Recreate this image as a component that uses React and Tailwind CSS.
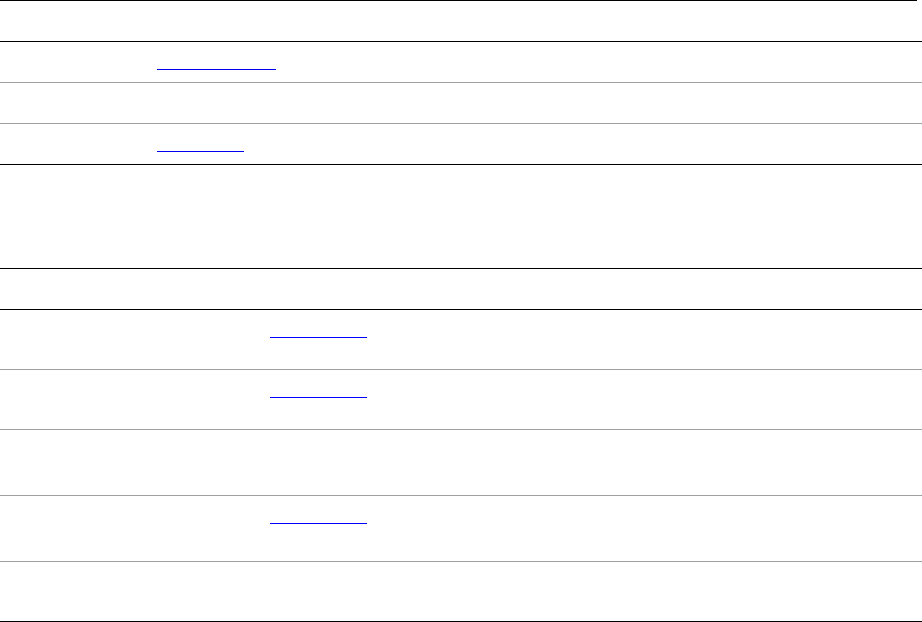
export default function App() {
  const Row = ({ h, border, link, linkColor = "bg-[#0000ee]", linkLeft = "pl-[157px]" }) => (
    <div className={`w-[922px] ${h} ${border} border-b flex ${linkLeft} pt-[27px]`}>
      {link ? <div className={`h-px ${link} ${linkColor}`} /> : null}
    </div>
  );
  return (
    <div className="w-[922px] h-[622px] bg-white overflow-hidden flex flex-col" style={{ fontFamily: '"Liberation Sans", Arial, sans-serif' }}>
      <div className="w-[917px] h-px bg-black" />
      <div className="w-[922px] h-[41px] border-b border-black" />
      <Row h="h-[41px]" border="border-[#a0a0a0]" link="w-[119px]" />
      <Row h="h-[41px]" border="border-[#a0a0a0]" />
      <Row h="h-[41px]" border="border-black" link="w-[87px]" />
      <div className="h-[103px]" />
      <div className="w-[922px] h-px bg-black" />
      <div className="w-[922px] h-[41px] border-b border-black" />
      <Row h="h-[60px]" border="border-[#a0a0a0]" link="w-[97px]" linkColor="bg-[#0000ff]" linkLeft="pl-[270px]" />
      <Row h="h-[60px]" border="border-[#a0a0a0]" link="w-[97px]" linkColor="bg-[#0000ff]" linkLeft="pl-[270px]" />
      <Row h="h-[66px]" border="border-[#a0a0a0]" />
      <Row h="h-[66px]" border="border-[#a0a0a0]" link="w-[97px]" linkColor="bg-[#0000ff]" linkLeft="pl-[270px]" />
      <Row h="h-[60px]" border="border-black" />
    </div>
  );
}
